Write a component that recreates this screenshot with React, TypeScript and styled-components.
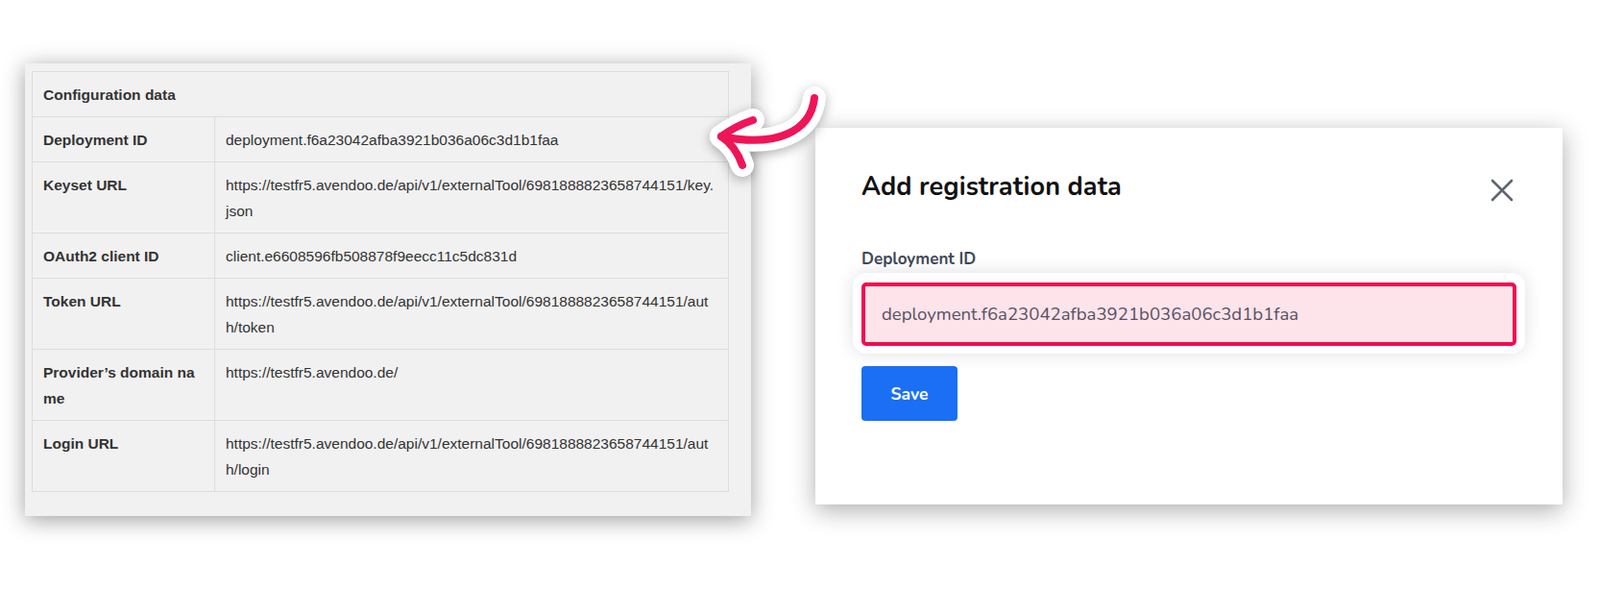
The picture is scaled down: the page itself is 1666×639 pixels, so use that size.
import React from "react";
import styled, { createGlobalStyle } from "styled-components";

const GlobalStyle = createGlobalStyle`
    html, body {
        margin: 0;
        padding: 0;
        background: #ffffff;
    }
`;

const Page = styled.div`
    position: relative;
    width: 1666px;
    height: 639px;
    box-sizing: border-box;
    padding: 66px 0 0 26px;
    display: flex;
    align-items: flex-start;
    overflow: hidden;
`;

// left side: the config table as seen in the tool
const ConfigPanel = styled.div`
    width: 756px;
    box-sizing: border-box;
    padding: 8px 23px 25px 7px;
    background: #f1f1f1;
    box-shadow: 0 4px 22px rgba(0, 0, 0, 0.38);
`;

const Table = styled.table`
    width: 726px;
    border-collapse: collapse;
    table-layout: fixed;
    font-family: "Liberation Sans", Arial, sans-serif;
    font-size: 15.5px;
    line-height: 27px;
    color: #333333;
`;

const Cell = styled.td<{ $head?: boolean }>`
    border: 1px solid #dddddd;
    padding: 10px ${(p) => (p.$head ? "11px" : "13.5px")} 9px 11px;
    vertical-align: top;
    word-break: break-all;
    font-weight: ${(p) => (p.$head ? 700 : 400)};
`;

const Arrow = styled.svg`
    position: absolute;
    left: 730px;
    top: 80px;
    overflow: visible;
    filter: drop-shadow(0 3px 6px rgba(0, 0, 0, 0.3));
`;

// right side: the modal
const Modal = styled.div`
    width: 778px;
    height: 392px;
    margin: 67px 0 0 67px;
    box-sizing: border-box;
    padding: 44px 48px 0 48px;
    background: #ffffff;
    box-shadow: 0 6px 24px rgba(0, 0, 0, 0.32);
    font-family: "Nunito", Lato, "Open Sans", sans-serif;
`;

const ModalHeader = styled.div`
    display: flex;
    justify-content: space-between;
    align-items: center;
    padding-right: 3px;
`;

const Title = styled.h2`
    margin: 0;
    font-size: 27px;
    line-height: 36px;
    font-weight: 700;
    color: #111111;
    letter-spacing: 0.1px;
`;

const CloseButton = styled.button`
    border: none;
    background: none;
    padding: 0;
    width: 24px;
    height: 24px;
    display: flex;
    margin-top: 6px;
    cursor: pointer;
`;

const Label = styled.label`
    display: block;
    margin-top: 46px;
    font-size: 17px;
    line-height: 22px;
    font-weight: 700;
    color: #3f4856;
`;

const Highlight = styled.div`
    margin: 3px -9px 0 -9px;
    padding: 10px 9px 8px 9px;
    background: #ffffff;
    border-radius: 14px;
    box-shadow: 0 0 18px rgba(0, 0, 0, 0.13);
`;

const Input = styled.input`
    display: block;
    width: 100%;
    height: 66px;
    box-sizing: border-box;
    border: 4px solid #f20a52;
    border-radius: 5px;
    background: #fce4ea;
    padding: 0 17px;
    font-family: "Nunito", Lato, "Open Sans", sans-serif;
    font-size: 18.6px;
    color: #5a5064;
    outline: none;
`;

const SaveButton = styled.button`
    margin-top: 13px;
    width: 100px;
    height: 57px;
    border: none;
    border-radius: 4px;
    background: #1a6ff5;
    color: #ffffff;
    font-family: "Nunito", Lato, "Open Sans", sans-serif;
    font-size: 17.5px;
    font-weight: 700;
    cursor: pointer;
`;

const rows = [
    { label: "Deployment ID", value: "deployment.f6a23042afba3921b036a06c3d1b1faa" },
    { label: "Keyset URL", value: "https://testfr5.avendoo.de/api/v1/externalTool/6981888823658744151/key.json" },
    { label: "OAuth2 client ID", value: "client.e6608596fb508878f9eecc11c5dc831d" },
    { label: "Token URL", value: "https://testfr5.avendoo.de/api/v1/externalTool/6981888823658744151/auth/token" },
    { label: "Provider’s domain name", value: "https://testfr5.avendoo.de/" },
    { label: "Login URL", value: "https://testfr5.avendoo.de/api/v1/externalTool/6981888823658744151/auth/login" },
];

const arrowBody = "M118 22 C 114 56, 80 74, 21 62";
const arrowHead = "M54 45 Q 36 51 21 62 Q 36 72 43 92";

export default function App() {
    return (
        <>
            <GlobalStyle />
            <Page>
                <ConfigPanel>
                    <Table>
                        <colgroup>
                            <col style={{ width: 190 }} />
                            <col />
                        </colgroup>
                        <tbody>
                            <tr>
                                <Cell $head colSpan={2}>Configuration data</Cell>
                            </tr>
                            {rows.map((row) => (
                                <tr key={row.label}>
                                    <Cell $head>{row.label}</Cell>
                                    <Cell>{row.value}</Cell>
                                </tr>
                            ))}
                        </tbody>
                    </Table>
                </ConfigPanel>

                <Arrow width="140" height="110" viewBox="0 0 140 110">
                    <g fill="none" stroke="#ffffff" strokeWidth="24" strokeLinecap="round" strokeLinejoin="round">
                        <path d={arrowBody} />
                        <path d={arrowHead} />
                    </g>
                    <g fill="none" stroke="#ee1558" strokeWidth="8" strokeLinecap="round" strokeLinejoin="round">
                        <path d={arrowBody} />
                        <path d={arrowHead} />
                    </g>
                </Arrow>

                <Modal>
                    <ModalHeader>
                        <Title>Add registration data</Title>
                        <CloseButton aria-label="Close">
                            <svg width="24" height="24" viewBox="0 0 24 24">
                                <path d="M2 2 L22 22 M22 2 L2 22" stroke="#5f6672" strokeWidth="2.6" strokeLinecap="round" />
                            </svg>
                        </CloseButton>
                    </ModalHeader>
                    <Label htmlFor="deployment-id">Deployment ID</Label>
                    <Highlight>
                        <Input id="deployment-id" readOnly value="deployment.f6a23042afba3921b036a06c3d1b1faa" />
                    </Highlight>
                    <SaveButton>Save</SaveButton>
                </Modal>
            </Page>
        </>
    );
}
